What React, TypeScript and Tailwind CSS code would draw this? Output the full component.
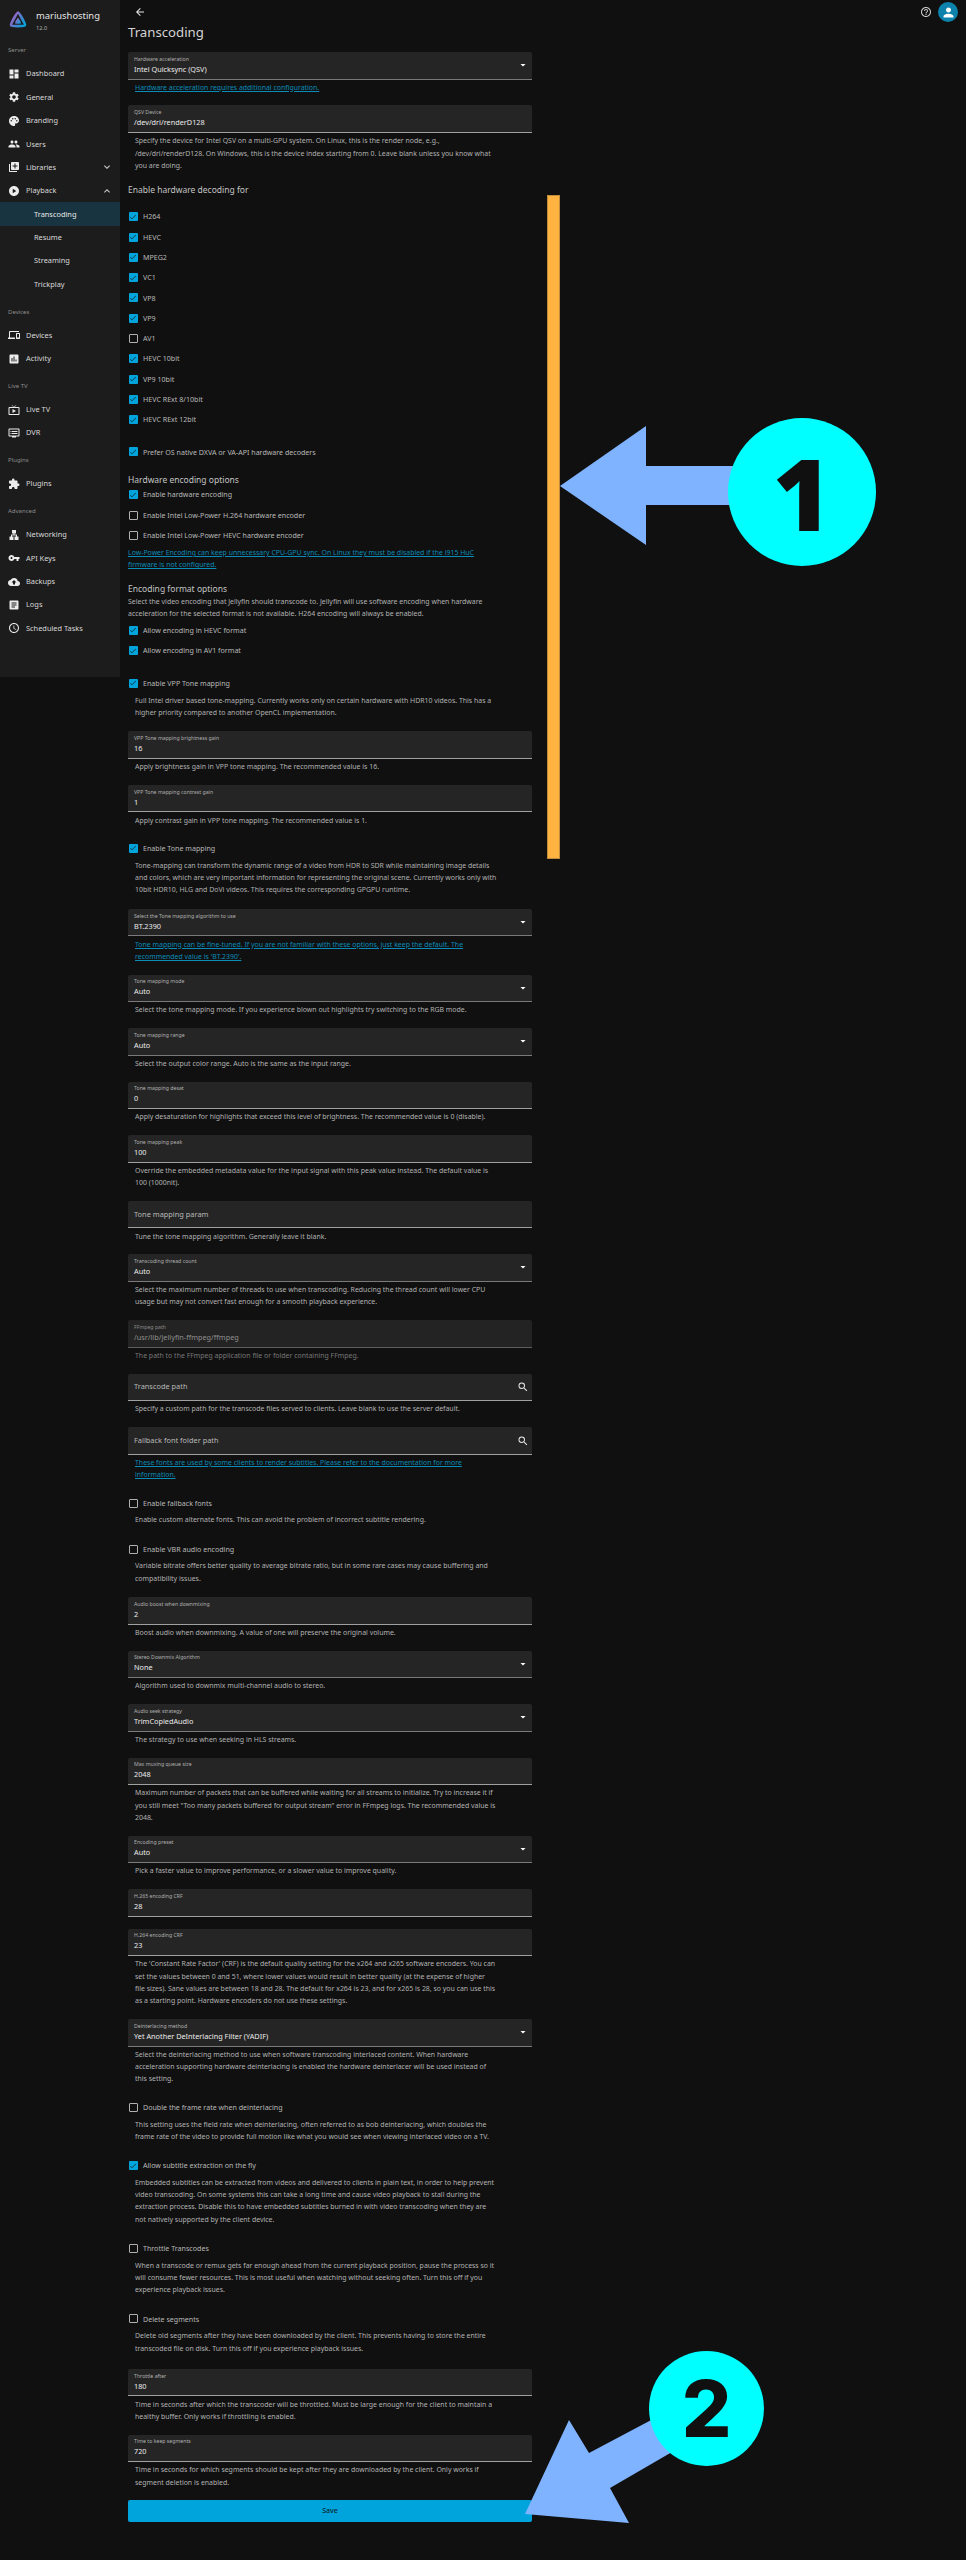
import type { ReactNode } from "react";
import {
  MdArrowBack,
  MdArrowDropDown,
  MdArticle,
  MdAssessment,
  MdBackup,
  MdCheck,
  MdDashboard,
  MdDevices,
  MdDvr,
  MdExpandLess,
  MdExpandMore,
  MdExtension,
  MdHelpOutline,
  MdLan,
  MdLibraryAdd,
  MdLiveTv,
  MdPalette,
  MdPeople,
  MdPerson,
  MdPlayCircle,
  MdSchedule,
  MdSearch,
  MdSettings,
  MdVpnKey,
} from "react-icons/md";

const nav = [
  { section: "Server" },
  { icon: MdDashboard, label: "Dashboard" },
  { icon: MdSettings, label: "General" },
  { icon: MdPalette, label: "Branding" },
  { icon: MdPeople, label: "Users" },
  { icon: MdLibraryAdd, label: "Libraries", chevron: "down" },
  { icon: MdPlayCircle, label: "Playback", chevron: "up" },
  { label: "Transcoding", active: true },
  { label: "Resume" },
  { label: "Streaming" },
  { label: "Trickplay" },
  { section: "Devices" },
  { icon: MdDevices, label: "Devices" },
  { icon: MdAssessment, label: "Activity" },
  { section: "Live TV" },
  { icon: MdLiveTv, label: "Live TV" },
  { icon: MdDvr, label: "DVR" },
  { section: "Plugins" },
  { icon: MdExtension, label: "Plugins" },
  { section: "Advanced" },
  { icon: MdLan, label: "Networking" },
  { icon: MdVpnKey, label: "API Keys" },
  { icon: MdBackup, label: "Backups" },
  { icon: MdArticle, label: "Logs" },
  { icon: MdSchedule, label: "Scheduled Tasks" },
];

const JellyfinLogo = () => (
  <svg viewBox="0 0 24 24" className="h-[20px] w-[20px]">
    <defs>
      <linearGradient id="jf" x1="0" y1="0.2" x2="1" y2="0.9">
        <stop offset="0" stopColor="#aa5cc3" />
        <stop offset="1" stopColor="#00a4dc" />
      </linearGradient>
    </defs>
    <path
      d="M12 3.2C10.6 3.2 3 16.8 3.7 18.3 4.400 19.800 19.600 19.800 20.300 18.300 21 16.800 13.400 3.200 12 3.200Z"
      fill="none"
      stroke="url(#jf)"
      strokeWidth="3.2"
    />
    <path
      d="M12 9.200C11.300 9.200 8 15.300 8.300 16 8.700 16.700 15.300 16.700 15.700 16 16 15.300 12.700 9.200 12 9.200Z"
      fill="url(#jf)"
    />
  </svg>
);

const Sidebar = () => (
  <aside className="h-[677px] w-[120px] shrink-0 bg-[#1c1c1c] text-[#d8d8d8]">
    <div className="flex h-[34.7px] items-start pl-[8px] pt-[10px]">
      <JellyfinLogo />
      <div className="ml-[8px]">
        <div className="text-[9.4px] leading-[12px] text-[#e4e4e4]">mariushosting</div>
        <div className="mt-[2px] text-[5.6px] leading-[8px] text-[#b0b0b0]">12.0</div>
      </div>
    </div>
    {nav.map((item, i) => {
      if (item.section) {
        return (
          <div key={i} className="flex h-[27.7px] items-end pb-[8px] pl-[8px] text-[6px] leading-[8px] text-[#8c8c8c]">
            {item.section}
          </div>
        );
      }
      const Icon = item.icon;
      return (
        <div
          key={i}
          className={
            item.active
              ? "flex h-[23.35px] items-center bg-[#173440] pl-[34px] text-[7.4px] text-[#e8e8e8]"
              : Icon
                ? "flex h-[23.35px] items-center pl-[8px] text-[7.4px]"
                : "flex h-[23.35px] items-center pl-[34px] text-[7.4px]"
          }
        >
          {Icon && <Icon className="mr-[6px] h-[12px] w-[12px] text-[#ececec]" />}
          <span>{item.label}</span>
          {item.chevron === "down" && <MdExpandMore className="ml-auto mr-[7.5px] h-[12px] w-[12px] text-[#cfcfcf]" />}
          {item.chevron === "up" && <MdExpandLess className="ml-auto mr-[7.5px] h-[12px] w-[12px] text-[#cfcfcf]" />}
        </div>
      );
    })}
  </aside>
);

const Help = ({ children, link, dim, after = "pb-[11.4px]" }: { children: ReactNode; link?: boolean; dim?: boolean; after?: string }) => (
  <div className={`whitespace-pre-line pl-[7px] pt-[2.3px] text-[6.95px] leading-[12.3px] ${after} ${link ? "text-[#0a8bb8] underline" : dim ? "text-[#777]" : "text-[#b2b2b2]"}`}>
    {children}
  </div>
);

type FieldProps = {
  label: string;
  value?: string;
  select?: boolean;
  search?: boolean;
  dim?: boolean;
  help?: string;
  link?: boolean;
  flush?: boolean;
};

const Field = ({ label, value, select, search, dim, help, link, flush }: FieldProps) => (
  <div className={flush ? "mb-[12px]" : ""}>
    <div className={`relative flex h-[27.5px] flex-col justify-center rounded-t-[2px] border-b px-[6px] ${dim ? "border-[#5e5e5e] bg-[#232323]" : select ? "border-[#7a7a7a] bg-[#252525]" : "border-[#a0a0a0] bg-[#252525]"}`}>
      {value !== undefined ? (
        <>
          <div className={`text-[5.2px] leading-[7px] ${dim ? "text-[#8a8a8a]" : "text-[#b0b0b0]"}`}>{label}</div>
          <div className={`mt-[1px] text-[7.3px] leading-[11px] ${dim ? "text-[#8f8f8f]" : "text-[#ececec]"}`}>{value}</div>
        </>
      ) : (
        <div className="text-[7.4px] leading-[11px] text-[#b8b8b8]">{label}</div>
      )}
      {select && <MdArrowDropDown className="absolute right-[3px] top-[7px] h-[12px] w-[12px] text-white" />}
      {search && <MdSearch className="absolute right-[3.5px] top-[7.5px] h-[12px] w-[12px] text-[#e8e8e8]" />}
    </div>
    {help && <Help link={link} dim={dim}>{help}</Help>}
  </div>
);

const Check = ({ label, on, help, after }: { label: string; on?: boolean; help?: string; after?: string }) => (
  <div>
    <div className="flex h-[20.3px] items-center pl-[0.5px]">
      {on ? (
        <span className="flex h-[9px] w-[9px] items-center justify-center rounded-[1px] bg-[#00a4dc]">
          <MdCheck className="h-[8px] w-[8px] text-[#0d2a36]" />
        </span>
      ) : (
        <span className="h-[9px] w-[9px] rounded-[1px] border border-[#b0b0b0]" />
      )}
      <span className="ml-[5.500px] text-[7.100px] text-[#b8b8b8]">{label}</span>
    </div>
    {help && (
      <div className={`whitespace-pre-line pl-[7px] pt-[1.2px] text-[6.95px] leading-[12.3px] text-[#b2b2b2] ${after ?? "pb-[12.2px]"}`}>{help}</div>
    )}
  </div>
);

const SubHead = ({ children, className }: { children: ReactNode; className: string }) => (
  <div className={`text-[8.5px] text-[#c4c4c4] ${className}`}>{children}</div>
);

const decoders: [string, boolean][] = [
  ["H264", true],
  ["HEVC", true],
  ["MPEG2", true],
  ["VC1", true],
  ["VP8", true],
  ["VP9", true],
  ["AV1", false],
  ["HEVC 10bit", true],
  ["VP9 10bit", true],
  ["HEVC RExt 8/10bit", true],
  ["HEVC RExt 12bit", true],
];

const Form = () => (
  <div className="w-[404px]">
    <Field
      label="Hardware acceleration"
      value="Intel Quicksync (QSV)"
      select
      link
      help="Hardware acceleration requires additional configuration."
    />
    <Field
      label="QSV Device"
      value="/dev/dri/renderD128"
      help={"Specify the device for Intel QSV on a multi-GPU system. On Linux, this is the render node, e.g.,\n/dev/dri/renderD128. On Windows, this is the device index starting from 0. Leave blank unless you know what\nyou are doing."}
    />
    <SubHead className="mb-[11px] h-[12px] leading-[12px]">Enable hardware decoding for</SubHead>
    {decoders.map(([name, on]) => (
      <Check key={name} label={name} on={on} />
    ))}
    <div className="mt-[12px]">
      <Check label="Prefer OS native DXVA or VA-API hardware decoders" on />
    </div>
    <SubHead className="mt-[11.500px] h-[11px] leading-[11px]">Hardware encoding options</SubHead>
    <Check label="Enable hardware encoding" on />
    <Check label="Enable Intel Low-Power H.264 hardware encoder" />
    <Check label="Enable Intel Low-Power HEVC hardware encoder" />
    <div className="mt-[1.600px] whitespace-pre-line text-[6.95px] leading-[12.3px] text-[#0a8bb8] underline">
      {"Low-Power Encoding can keep unnecessary CPU-GPU sync. On Linux they must be disabled if the i915 HuC\nfirmware is not configured."}
    </div>
    <SubHead className="mt-[11.500px] h-[11px] leading-[11px]">Encoding format options</SubHead>
    <div className="mt-[1.300px] whitespace-pre-line text-[6.95px] leading-[12.3px] text-[#b2b2b2]">
      {"Select the video encoding that Jellyfin should transcode to. Jellyfin will use software encoding when hardware\nacceleration for the selected format is not available. H264 encoding will always be enabled."}
    </div>
    <Check label="Allow encoding in HEVC format" on />
    <Check label="Allow encoding in AV1 format" on />
    <div className="mt-[12.400px]">
      <Check
        label="Enable VPP Tone mapping"
        on
        help={"Full Intel driver based tone-mapping. Currently works only on certain hardware with HDR10 videos. This has a\nhigher priority compared to another OpenCL implementation."}
      />
    </div>
    <Field label="VPP Tone mapping brightness gain" value="16" help="Apply brightness gain in VPP tone mapping. The recommended value is 16." />
    <Field label="VPP Tone mapping contrast gain" value="1" help="Apply contrast gain in VPP tone mapping. The recommended value is 1." />
    <Check
      label="Enable Tone mapping"
      on
      help={"Tone-mapping can transform the dynamic range of a video from HDR to SDR while maintaining image details\nand colors, which are very important information for representing the original scene. Currently works only with\n10bit HDR10, HLG and DoVi videos. This requires the corresponding GPGPU runtime."}
    />
    <Field
      label="Select the Tone mapping algorithm to use"
      value="BT.2390"
      select
      link
      help={"Tone mapping can be fine-tuned. If you are not familiar with these options, just keep the default. The\nrecommended value is 'BT.2390'."}
    />
    <Field label="Tone mapping mode" value="Auto" select help="Select the tone mapping mode. If you experience blown out highlights try switching to the RGB mode." />
    <Field label="Tone mapping range" value="Auto" select help="Select the output color range. Auto is the same as the input range." />
    <Field label="Tone mapping desat" value="0" help="Apply desaturation for highlights that exceed this level of brightness. The recommended value is 0 (disable)." />
    <Field
      label="Tone mapping peak"
      value="100"
      help={"Override the embedded metadata value for the input signal with this peak value instead. The default value is\n100 (1000nit)."}
    />
    <Field label="Tone mapping param" help="Tune the tone mapping algorithm. Generally leave it blank." />
    <Field
      label="Transcoding thread count"
      value="Auto"
      select
      help={"Select the maximum number of threads to use when transcoding. Reducing the thread count will lower CPU\nusage but may not convert fast enough for a smooth playback experience."}
    />
    <Field label="FFmpeg path" value="/usr/lib/jellyfin-ffmpeg/ffmpeg" dim help="The path to the FFmpeg application file or folder containing FFmpeg." />
    <Field label="Transcode path" search help="Specify a custom path for the transcode files served to clients. Leave blank to use the server default." />
    <Field
      label="Fallback font folder path"
      search
      link
      help={"These fonts are used by some clients to render subtitles. Please refer to the documentation for more\ninformation."}
    />
    <Check label="Enable fallback fonts" help="Enable custom alternate fonts. This can avoid the problem of incorrect subtitle rendering." />
    <Check
      label="Enable VBR audio encoding"
      help={"Variable bitrate offers better quality to average bitrate ratio, but in some rare cases may cause buffering and\ncompatibility issues."}
    />
    <Field label="Audio boost when downmixing" value="2" help="Boost audio when downmixing. A value of one will preserve the original volume." />
    <Field label="Stereo Downmix Algorithm" value="None" select help="Algorithm used to downmix multi-channel audio to stereo." />
    <Field label="Audio seek strategy" value="TrimCopiedAudio" select help="The strategy to use when seeking in HLS streams." />
    <Field
      label="Max muxing queue size"
      value="2048"
      help={"Maximum number of packets that can be buffered while waiting for all streams to initialize. Try to increase it if\nyou still meet \"Too many packets buffered for output stream\" error in FFmpeg logs. The recommended value is\n2048."}
    />
    <Field label="Encoding preset" value="Auto" select help="Pick a faster value to improve performance, or a slower value to improve quality." />
    <Field label="H.265 encoding CRF" value="28" flush />
    <Field
      label="H.264 encoding CRF"
      value="23"
      help={"The 'Constant Rate Factor' (CRF) is the default quality setting for the x264 and x265 software encoders. You can\nset the values between 0 and 51, where lower values would result in better quality (at the expense of higher\nfile sizes). Sane values are between 18 and 28. The default for x264 is 23, and for x265 is 28, so you can use this\nas a starting point. Hardware encoders do not use these settings."}
    />
    <Field
      label="Deinterlacing method"
      value="Yet Another DeInterlacing Filter (YADIF)"
      select
      help={"Select the deinterlacing method to use when software transcoding interlaced content. When hardware\nacceleration supporting hardware deinterlacing is enabled the hardware deinterlacer will be used instead of\nthis setting."}
    />
    <Check
      label="Double the frame rate when deinterlacing"
      help={"This setting uses the field rate when deinterlacing, often referred to as bob deinterlacing, which doubles the\nframe rate of the video to provide full motion like what you would see when viewing interlaced video on a TV."}
    />
    <Check
      label="Allow subtitle extraction on the fly"
      on
      help={"Embedded subtitles can be extracted from videos and delivered to clients in plain text, in order to help prevent\nvideo transcoding. On some systems this can take a long time and cause video playback to stall during the\nextraction process. Disable this to have embedded subtitles burned in with video transcoding when they are\nnot natively supported by the client device."}
    />
    <Check
      label="Throttle Transcodes"
      help={"When a transcode or remux gets far enough ahead from the current playback position, pause the process so it\nwill consume fewer resources. This is most useful when watching without seeking often. Turn this off if you\nexperience playback issues."}
    />
    <Check
      label="Delete segments"
      after="pb-[14px]"
      help={"Delete old segments after they have been downloaded by the client. This prevents having to store the entire\ntranscoded file on disk. Turn this off if you experience playback issues."}
    />
    <Field
      label="Throttle after"
      value="180"
      help={"Time in seconds after which the transcoder will be throttled. Must be large enough for the client to maintain a\nhealthy buffer. Only works if throttling is enabled."}
    />
    <Field
      label="Time to keep segments"
      value="720"
      help={"Time in seconds for which segments should be kept after they are downloaded by the client. Only works if\nsegment deletion is enabled."}
    />
    <button className="flex h-[21.500px] w-full items-center justify-center rounded-[2px] bg-[#00a4dc] text-[7px] font-medium text-[#0b2530]">
      Save
    </button>
  </div>
);

// the two numbered callouts painted over the screenshot
const Callouts = () => (
  <>
    <div className="absolute left-[547px] top-[195px] h-[664px] w-[13px] border border-[#c08c3c] bg-[#ffb340]" />
    <svg className="absolute left-0 top-0" width="966" height="2560">
      <polygon points="560,486 646,426 646,466 740,466 740,505 646,505 646,545" fill="#80b3ff" />
      <polygon points="525,2514 569,2420 589,2453 655,2418 672,2452 610,2488 629,2523" fill="#80b3ff" />
    </svg>
    <div className="absolute left-[728px] top-[418px] flex h-[148px] w-[148px] items-center justify-center rounded-full bg-[#00ffff] font-['Open_Sans',sans-serif] text-[100px] font-extrabold leading-none text-[#101010]">
      1
    </div>
    <div className="absolute left-[649px] top-[2351px] flex h-[115px] w-[115px] items-center justify-center rounded-full bg-[#00ffff] font-['Inter',sans-serif] text-[78px] font-extrabold leading-none text-[#101010]">
      2
    </div>
  </>
);

export default function App() {
  return (
    <div className="relative flex min-h-[2560px] w-[966px] items-start overflow-hidden bg-[#101010] font-['Noto_Sans',sans-serif]">
      <Sidebar />
      <main className="min-w-0 flex-1 pl-[8px]">
        <div className="flex h-[22px] items-center pl-[6px] pt-[2px]">
          <MdArrowBack className="h-[12px] w-[12px] text-[#e8e8e8]" />
          <div className="ml-auto mr-[8px] flex items-center gap-[6px]">
            <MdHelpOutline className="h-[12px] w-[12px] text-[#cfcfcf]" />
            <span className="flex h-[20px] w-[20px] items-center justify-center rounded-full bg-[#0d82ad]">
              <MdPerson className="h-[15px] w-[15px] text-white" />
            </span>
          </div>
        </div>
        <h1 className="mb-[10px] h-[20px] text-[13.2px] leading-[20px] text-[#d4d4d4]">Transcoding</h1>
        <Form />
      </main>
      <Callouts />
    </div>
  );
}
